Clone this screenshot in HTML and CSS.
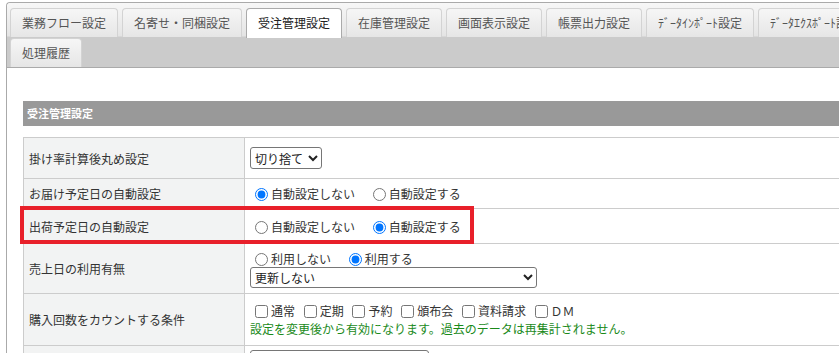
FILE: index.html
```html
<!DOCTYPE html>
<html lang="ja">
<head>
  <meta charset="UTF-8">
  <meta name="viewport" content="width=device-width, initial-scale=1.0">
  <title>受注管理設定</title>
  <link rel="stylesheet" href="styles.css">
</head>
<body>
  <div class="wrap">
    <ul class="tabs">
      <li class="tab">業務フロー設定</li>
      <li class="tab">名寄せ・同梱設定</li>
      <li class="tab is-active">受注管理設定</li>
      <li class="tab">在庫管理設定</li>
      <li class="tab">画面表示設定</li>
      <li class="tab">帳票出力設定</li>
      <li class="tab">ﾃﾞｰﾀｲﾝﾎﾟｰﾄ設定</li>
      <li class="tab">ﾃﾞｰﾀｴｸｽﾎﾟｰﾄ設定</li>
      <li class="tab">処理履歴</li>
    </ul>

    <div class="panel">
      <h3 class="section-title">受注管理設定</h3>

      <div class="table-box">
        <table class="settings">
          <tr class="row-round">
            <th>掛け率計算後丸め設定</th>
            <td>
              <select class="sel-round">
                <option>切り捨て</option>
                <option>切り上げ</option>
                <option>四捨五入</option>
              </select>
            </td>
          </tr>
          <tr class="row-deliv">
            <th>お届け予定日の自動設定</th>
            <td>
              <label class="opt"><input type="radio" name="deliv" checked>自動設定しない</label>
              <label class="opt"><input type="radio" name="deliv">自動設定する</label>
            </td>
          </tr>
          <tr class="row-ship">
            <th>出荷予定日の自動設定</th>
            <td>
              <label class="opt"><input type="radio" name="ship">自動設定しない</label>
              <label class="opt"><input type="radio" name="ship" checked>自動設定する</label>
            </td>
          </tr>
          <tr class="row-sales">
            <th>売上日の利用有無</th>
            <td>
              <label class="opt"><input type="radio" name="sales">利用しない</label>
              <label class="opt"><input type="radio" name="sales" checked>利用する</label>
              <br>
              <select class="sel-update">
                <option>更新しない</option>
                <option>出荷確定時に更新する</option>
              </select>
            </td>
          </tr>
          <tr class="row-count">
            <th>購入回数をカウントする条件</th>
            <td>
              <label class="chk"><input type="checkbox">通常</label>
              <label class="chk"><input type="checkbox">定期</label>
              <label class="chk"><input type="checkbox">予約</label>
              <label class="chk"><input type="checkbox">頒布会</label>
              <label class="chk"><input type="checkbox">資料請求</label>
              <label class="chk"><input type="checkbox">ＤＭ</label>
              <p class="note">設定を変更後から有効になります。過去のデータは再集計されません。</p>
            </td>
          </tr>
          <tr class="row-next">
            <th>同梱時の出荷予定日</th>
            <td>
              <select class="sel-next">
                <option>最も遅い日付に合わせる</option>
              </select>
            </td>
          </tr>
        </table>

        <!-- 注目箇所の赤枠 -->
        <div class="mark"></div>
      </div>
    </div>
  </div>
</body>
</html>
```

FILE: styles.css
```css
html,
body {
  margin: 0;
  overflow: hidden;
}

body {
  padding-top: 2px;
  font-family: "Noto Sans CJK JP", "Liberation Sans", sans-serif;
  font-size: 12px;
  color: #333;
}

.wrap {
  width: 900px;
  margin-left: 6px;
  border: 1px solid #aaa;
  border-right: 0;
  border-bottom: 0;
  border-radius: 4px 0 0 0;
  min-height: 400px;
}

.tabs {
  display: flex;
  flex-wrap: wrap;
  column-gap: 4px;
  row-gap: 1px;
  margin: 0;
  padding: 5px 3px 0;
  list-style: none;
  background: linear-gradient(to bottom, #f7f7f7 0, #e4e4e4 33px, #cbcbcb 34px, #cbcbcb 100%);
  border-bottom: 1px solid #aaa;
  border-radius: 4px 0 0 0;
}

.tab {
  height: 28px;
  line-height: 28px;
  padding: 0 11px;
  border: 1px solid #d3d3d3;
  border-bottom: 0;
  border-radius: 4px 4px 0 0;
  background: linear-gradient(to bottom, #f6f6f6, #e6e6e6);
  color: #555;
  white-space: nowrap;
}

.tab.is-active {
  height: 29px;
  margin-bottom: -1px;
  background: #fff;
  border-color: #aaa;
  color: #212121;
}

.panel {
  padding: 33px 0 0 16px;
  background: #fff;
}

.section-title {
  margin: 0 0 11px;
  height: 25px;
  line-height: 25px;
  padding-left: 4px;
  background-color: #999;
  color: #fff;
  font-size: 11px;
  font-weight: bold;
}

.table-box {
  position: relative;
}

.settings {
  width: 100%;
  border-collapse: collapse;
}

.settings th,
.settings td {
  border: 1px solid #ccc;
  padding: 4px 5px;
  text-align: left;
  vertical-align: middle;
  line-height: 17px;
}

.settings th {
  width: 210px;
  background-color: #f2f3f3;
  font-weight: normal;
  color: #333;
}

.settings tr.row-round {
  height: 41px;
}

.settings tr.row-deliv {
  height: 30px;
}

.settings tr.row-ship {
  height: 35px;
}

.settings tr.row-sales {
  height: 50px;
}

.settings tr.row-count {
  height: 52px;
}

.settings select {
  font-family: inherit;
  font-size: 12px;
  color: #222;
  border: 1px solid #767676;
  border-radius: 3px;
  background: #fff;
}

.sel-round {
  width: 72px;
  height: 22px;
}

.sel-update {
  width: 287px;
  height: 21px;
  margin-top: 0;
}

.sel-next {
  width: 179px;
  height: 21px;
}

.opt {
  margin-right: 10px;
}

.opt input {
  margin: 0 3px 0 5px;
  vertical-align: -2px;
}

.chk {
  margin-right: 1px;
}

.chk input {
  margin: 0 3px 0 5px;
  vertical-align: -2px;
}

.note {
  margin: 1px 0 0;
  color: #1a8a1a;
}

.mark {
  position: absolute;
  left: -3px;
  top: 69px;
  width: 446px;
  height: 30px;
  border: 4px solid #e8202a;
  pointer-events: none;
}
```
